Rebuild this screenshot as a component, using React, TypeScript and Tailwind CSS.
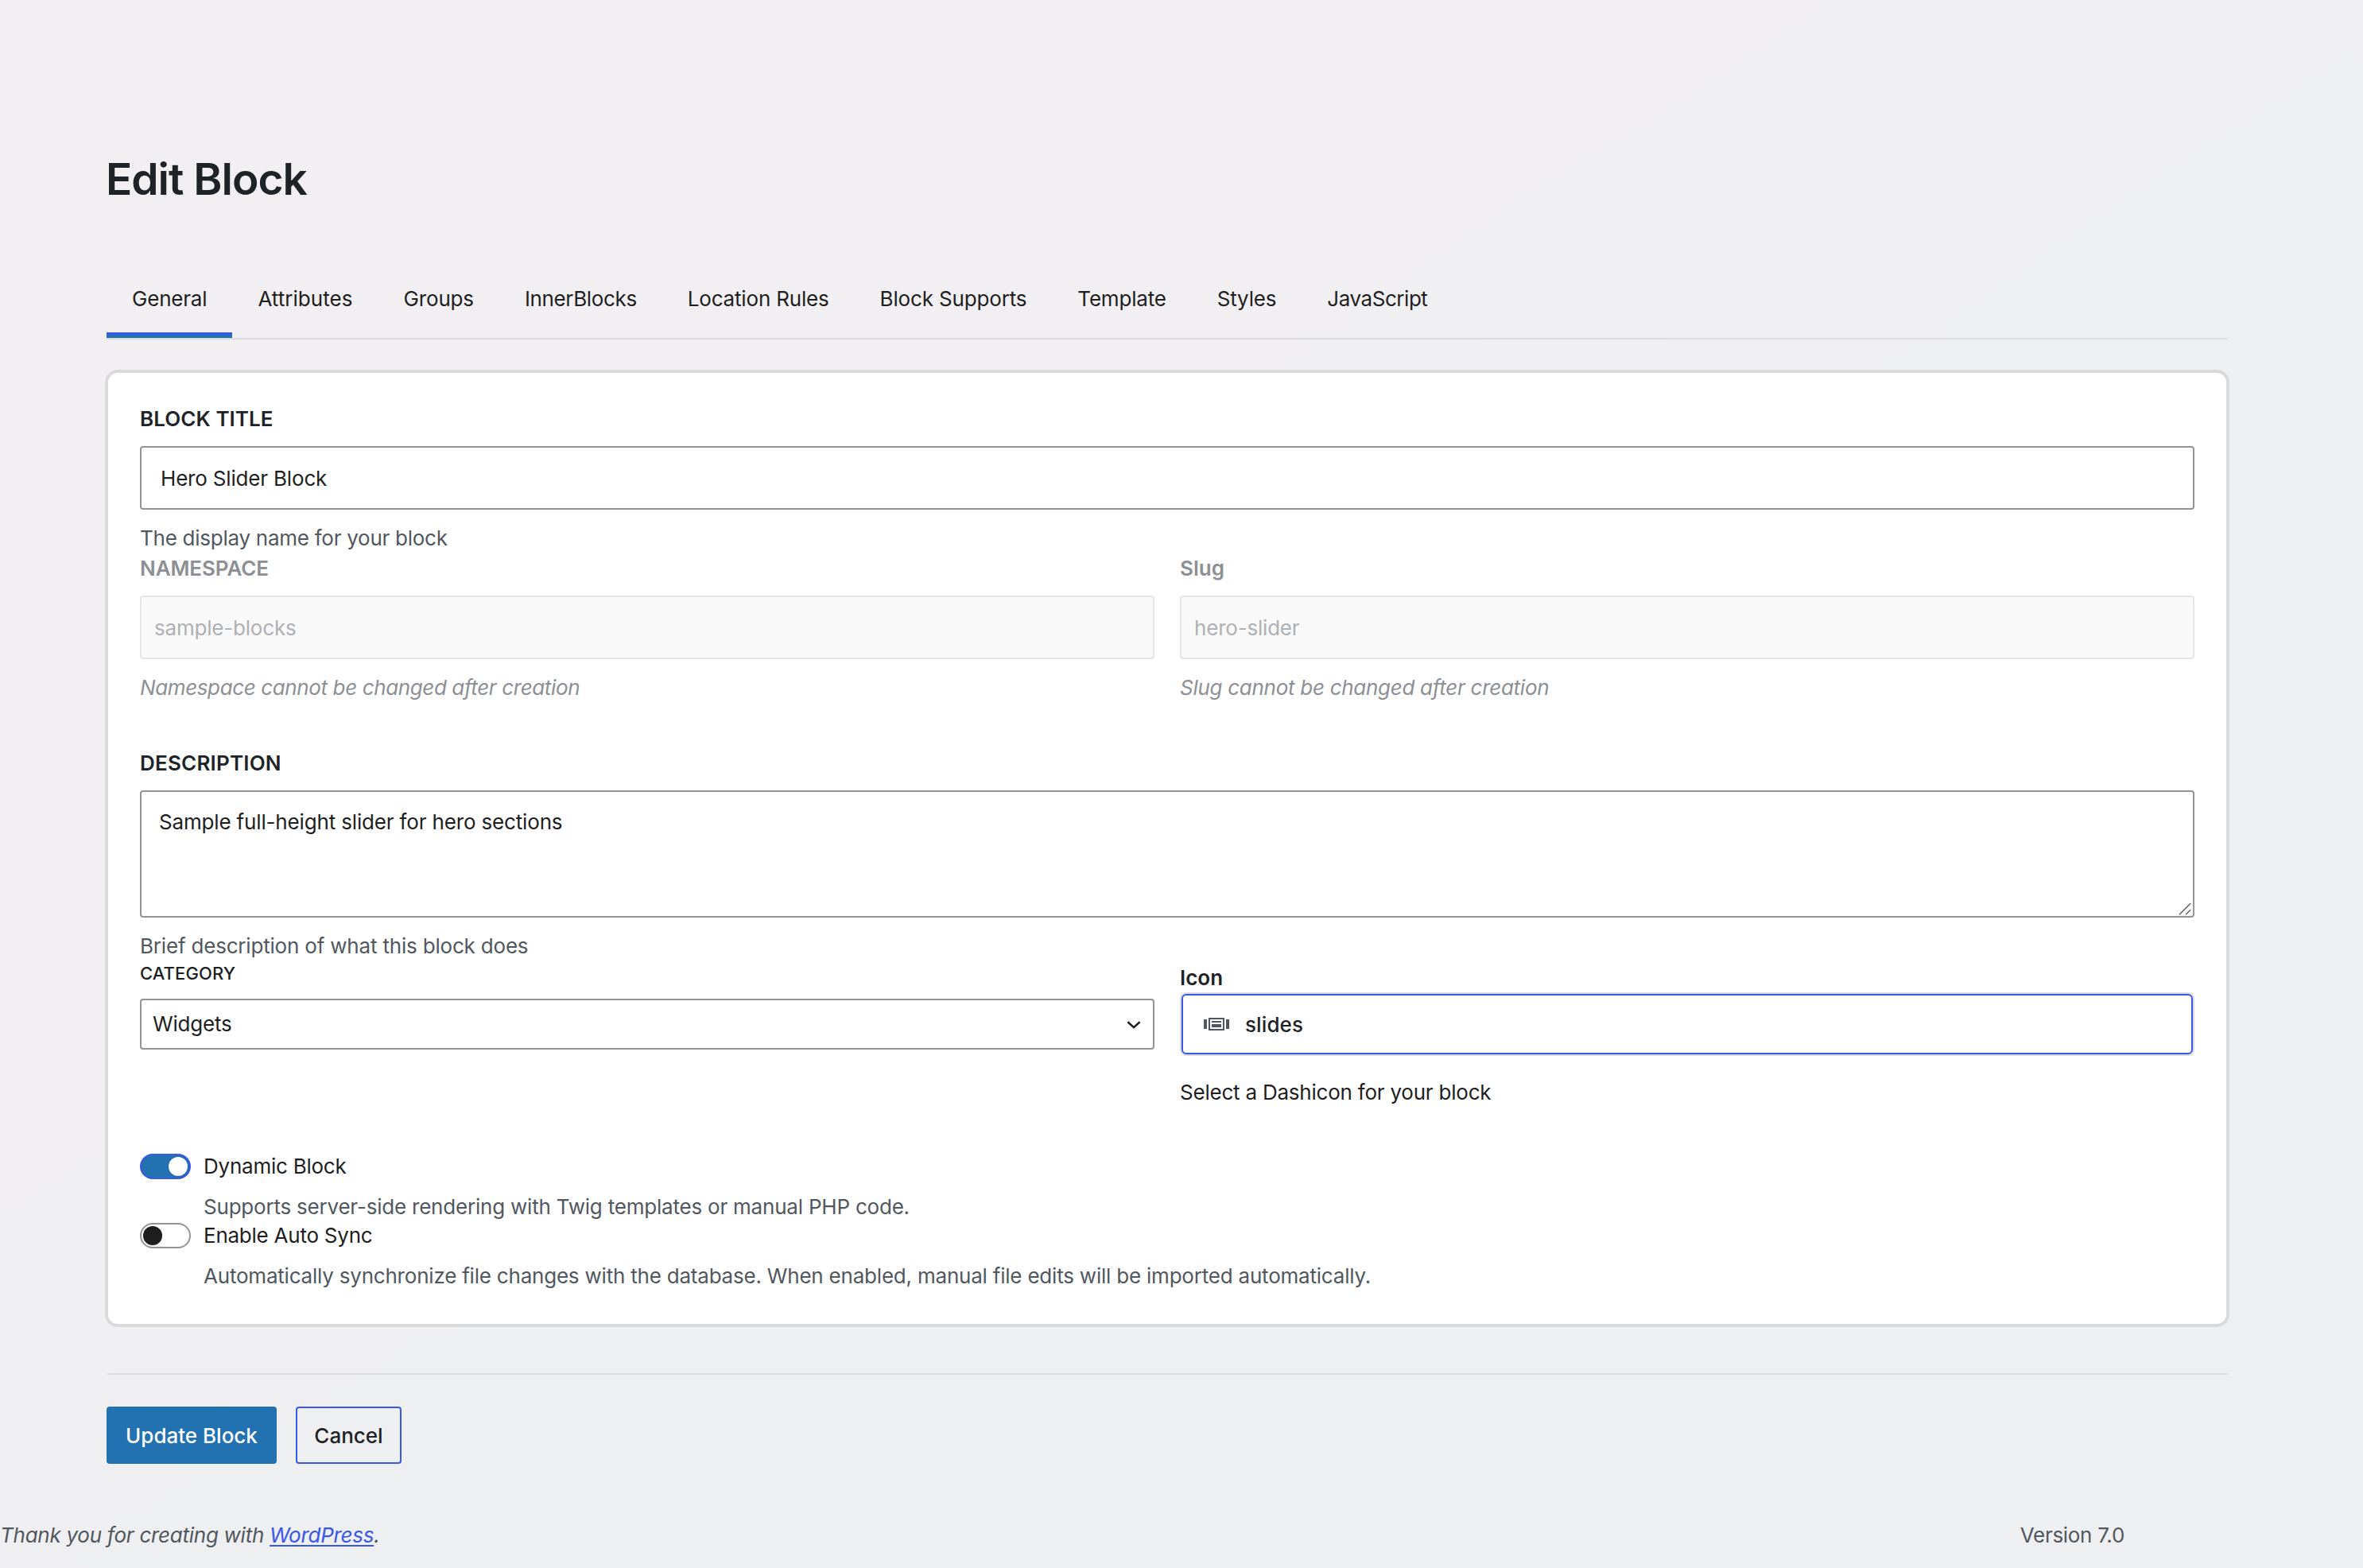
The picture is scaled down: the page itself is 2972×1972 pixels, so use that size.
import { useState } from 'react'
import type { ReactNode } from 'react'
import clsx from 'clsx'

const tabs = [
  { name: 'General', tracking: 'tracking-[-0.2px]' },
  { name: 'Attributes', tracking: 'tracking-[0.04px]' },
  { name: 'Groups', tracking: 'tracking-[-0.16px]' },
  { name: 'InnerBlocks', tracking: 'tracking-[-0.36px]' },
  { name: 'Location Rules', tracking: 'tracking-[-0.18px]' },
  { name: 'Block Supports', tracking: 'tracking-[-0.16px]' },
  { name: 'Template', tracking: 'tracking-[-0.2px]' },
  { name: 'Styles', tracking: 'tracking-[-0.16px]' },
  { name: 'JavaScript', tracking: 'tracking-[-0.45px]' },
]

function SlidesIcon({ className }: { className?: string }) {
  return (
    <svg viewBox="0 0 32 16" fill="currentColor" className={className}>
      <path d="M0 2h4v12H0zM28 2h4v12h-4z" />
      <path fillRule="evenodd" d="M6 0h20v16H6zM8 2v12h16V2z" />
      <path d="M10 4h12v2H10zM10 8h12v4H10z" />
    </svg>
  )
}

function ChevronIcon({ className }: { className?: string }) {
  return (
    <svg viewBox="0 0 18 10" fill="none" stroke="currentColor" strokeWidth="2.6" className={className}>
      <path d="M1.4 1.3 9 8.1l7.6-6.8" />
    </svg>
  )
}

function ResizeHandle({ className }: { className?: string }) {
  return (
    <svg viewBox="0 0 16 16" fill="none" stroke="currentColor" strokeWidth="1.4" className={className}>
      <path d="M1 15.2 15.2 1M9 15.2l6.2-6" />
    </svg>
  )
}

function Label({ children, className }: { children: ReactNode; className?: string }) {
  return <div className={clsx('text-[26px] leading-6 font-semibold', className)}>{children}</div>
}

function Help({ children, className }: { children: ReactNode; className?: string }) {
  return <p className={clsx('text-[26px] leading-10 whitespace-nowrap', className)}>{children}</p>
}

function LockedField({ label, value, help }: { label: ReactNode; value: string; help: ReactNode }) {
  return (
    <div className="flex-1 text-[#8c8f94]">
      {label}
      <input
        disabled
        value={value}
        className="mt-[22px] block h-20 w-full rounded border-2 border-[#e5e5e5] bg-[#f9f9f9] px-4 text-[26px] tracking-[-0.2px] text-[#afb1b4]"
      />
      {help}
    </div>
  )
}

function Toggle({ label, help, defaultOn = false }: { label: string; help: string; defaultOn?: boolean }) {
  const [on, setOn] = useState(defaultOn)

  return (
    <div>
      <div className="flex h-8 items-center gap-4">
        <button
          onClick={() => setOn(!on)}
          className={clsx(
            'flex h-8 w-16 items-center rounded-full border-2 px-[2px]',
            on ? 'justify-end border-[#3858e9] bg-[#2271b1]' : 'border-[#949494] bg-white',
          )}
        >
          <span className={clsx('size-6 rounded-full shadow-sm', on ? 'bg-white' : 'bg-[#1e1e1e]')} />
        </button>
        <span className="text-[26px] leading-8 tracking-[-0.24px]">{label}</span>
      </div>
      <Help className="mt-[15px] pl-20 tracking-[-0.21px] text-[#50575e]">{help}</Help>
    </div>
  )
}

export default function App() {
  const [active, setActive] = useState('General')
  const [title, setTitle] = useState('Hero Slider Block')
  const [description, setDescription] = useState('Sample full-height slider for hero sections')

  return (
    <div className="h-[1972px] w-[2972px] overflow-hidden bg-linear-to-br from-[#f1eff2] from-35% to-[#eeeff0] to-55% pt-[193px] font-[Inter,sans-serif] text-[#1e1e1e]">
      <div className="ml-[134px] w-[2668px]">
        <h1 className="-ml-px text-[55px] leading-[64px] font-semibold tracking-[-1px] text-[#1d2327]">Edit Block</h1>

        {/* Tabs */}
        <div className="mt-[72px] flex h-[98px] border-b-2 border-[#dcdcde]">
          {tabs.map(({ name, tracking }) => (
            <button
              key={name}
              onClick={() => setActive(name)}
              className={clsx(
                'relative flex h-24 items-center px-8 pb-[3px] text-[26px] whitespace-nowrap',
                tracking,
              )}
            >
              {name}
              {active === name && (
                <span className="absolute inset-x-0 bottom-0 h-[7px] border-t-[3px] border-[#3858e9] bg-[#2271b1]" />
              )}
            </button>
          ))}
        </div>

        {/* Card */}
        <div className="-mx-[2px] mt-[38px] rounded-[16px] border-4 border-[#dadadb] bg-white px-10 pt-[46px] pb-10">
          <Label className="tracking-[0.05px] text-[#1d2327]">BLOCK TITLE</Label>
          <input
            value={title}
            onChange={(e) => setTitle(e.target.value)}
            className="mt-[22px] block h-20 w-full rounded border-2 border-[#949494] px-6 text-[26px] tracking-[-0.18px]"
          />
          <Help className="mt-4 tracking-[-0.26px] text-[#50575e]">The display name for your block</Help>

          <div className="mt-[6px] flex gap-8">
            <LockedField
              label={<Label className="tracking-[-0.1px]">NAMESPACE</Label>}
              value="sample-blocks"
              help={
                <Help className="mt-4 tracking-[-0.38px] italic">Namespace cannot be changed after creation</Help>
              }
            />
            <LockedField
              label={<Label>Slug</Label>}
              value="hero-slider"
              help={<Help className="mt-4 tracking-[-0.28px] italic">Slug cannot be changed after creation</Help>}
            />
          </div>

          <Label className="mt-[63px] tracking-[0.2px] text-[#1d2327]">DESCRIPTION</Label>
          <div className="relative mt-[22px]">
            <textarea
              value={description}
              onChange={(e) => setDescription(e.target.value)}
              className="block h-40 w-full resize-none rounded border-2 border-[#949494] px-[22px] pt-5 text-[26px] leading-9 tracking-[-0.16px]"
            />
            <ResizeHandle className="pointer-events-none absolute right-1 bottom-[3px] size-4 text-[#5a5a5a]" />
          </div>
          <Help className="mt-4 tracking-[-0.19px] text-[#50575e]">Brief description of what this block does</Help>

          <div className="flex gap-8">
            <div className="flex-1">
              <div className="mt-[2px] text-[22px] leading-6 font-medium tracking-[0.1px]">CATEGORY</div>
              <div className="mt-5 flex h-16 items-center justify-between rounded border-2 border-[#949494] pr-[15px] pb-px pl-[14px] text-[26px] tracking-[-0.2px]">
                Widgets
                <ChevronIcon className="mt-[3px] h-[10px] w-[18px]" />
              </div>
            </div>
            <div className="flex-1">
              <Label className="mt-2 text-[#1d2327]">Icon</Label>
              <button className="mt-[6px] flex h-20 w-full rounded-lg border-2 border-[#dcdcde]">
                <span className="flex h-full w-full items-center gap-5 rounded-md border-2 border-[#3858e9] pl-[26px] text-[26px] font-medium tracking-[0.1px] text-[#1d2327]">
                  <SlidesIcon className="h-4 w-8 text-[#50575e]" />
                  slides
                </span>
              </button>
              <Help className="mt-[26px] tracking-[-0.22px]">Select a Dashicon for your block</Help>
            </div>
          </div>

          <div className="mt-[57px]">
            <Toggle
              defaultOn
              label="Dynamic Block"
              help="Supports server-side rendering with Twig templates or manual PHP code."
            />
            <Toggle
              label="Enable Auto Sync"
              help="Automatically synchronize file changes with the database. When enabled, manual file edits will be imported automatically."
            />
          </div>
        </div>

        {/* Actions */}
        <div className="mt-[58px] flex gap-6 border-t-2 border-[#dcdcde] pt-10">
          <button className="h-[72px] w-[214px] rounded bg-[#2271b1] text-[26px] font-medium text-white">
            Update Block
          </button>
          <button className="h-[72px] w-[133px] rounded border-2 border-[#3858e9] text-[26px] font-medium text-[#1d2327]">
            Cancel
          </button>
        </div>
      </div>

      <footer className="mt-[70px] flex w-[2672px] justify-between text-[26px] leading-10 text-[#50575e]">
        <p className="tracking-[-0.27px] italic">
          Thank you for creating with{' '}
          <a className="text-[#3858e9] underline decoration-2 underline-offset-[3px]">WordPress</a>.
        </p>
        <p className="tracking-[-0.3px]">Version 7.0</p>
      </footer>
    </div>
  )
}
